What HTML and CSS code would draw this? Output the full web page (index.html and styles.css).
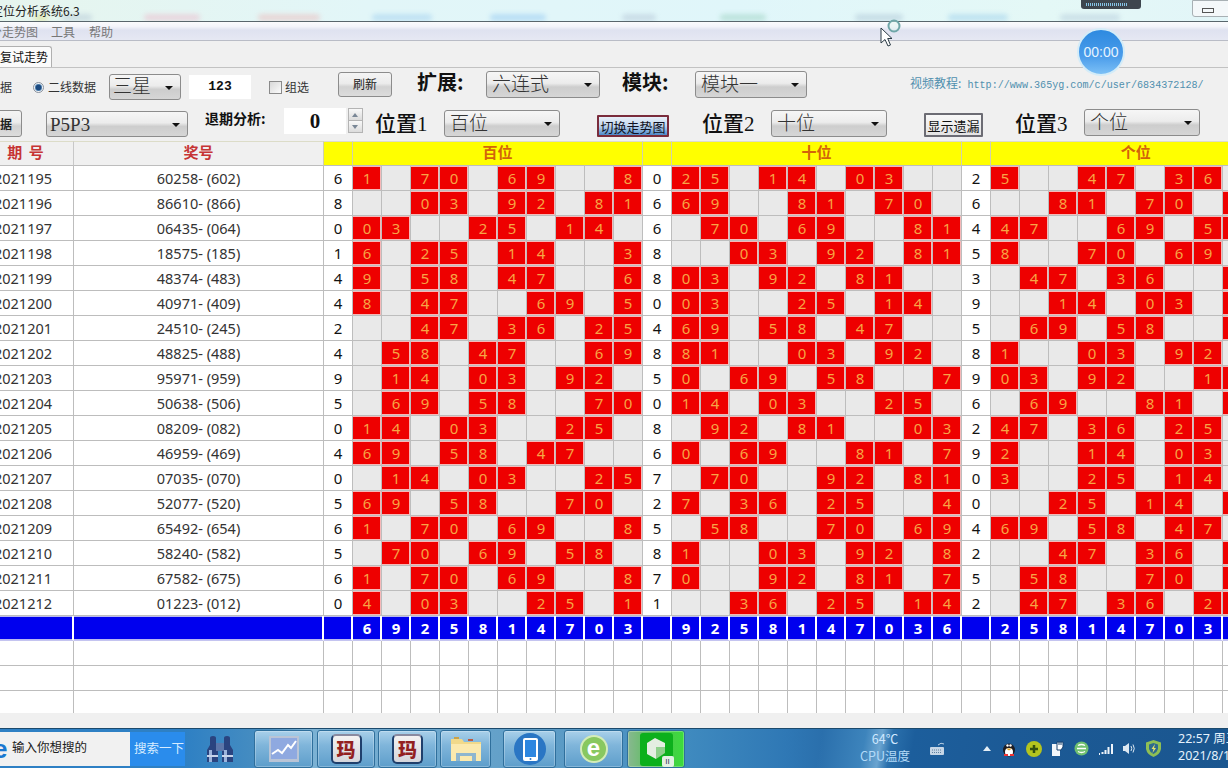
FILE: index.html
```html
<!DOCTYPE html>
<html lang="zh">
<head>
<meta charset="utf-8">
<title>定位分析系统6.3</title>
<link rel="stylesheet" href="styles.css">
</head>
<body>
<div class="screen">
  <div class="titlebar">
    <span class="title-text">定位分析系统6.3</span>
    <i class="blob b1"></i><i class="blob b2"></i><i class="blob b3"></i><i class="blob b4"></i><i class="blob b5"></i><i class="blob b6"></i><i class="blob b7"></i><i class="blob b8"></i><i class="blob b9"></i><i class="blob b10"></i><i class="blob b11"></i>
  </div>
  <div class="menubar">
    <span class="menu-a">分走势图</span><span class="menu-b">工具</span><span class="menu-c">帮助</span>
  </div>
  <div class="tabstrip"><div class="tab">复试走势</div></div>

  <div class="toolbar row1">
    <span class="lbl frag">据</span>
    <span class="radio"></span>
    <span class="lbl radio-text">二线数据</span>
    <div class="select s-star"><span>三星</span></div>
    <div class="field f-123">123</div>
    <span class="check"></span>
    <span class="lbl check-text">组选</span>
    <div class="btn b-refresh">刷新</div>
    <span class="big ext-l">扩展:</span>
    <div class="select s-ext"><span>六连式</span></div>
    <span class="big mod-l">模块:</span>
    <div class="select s-mod"><span>模块一</span></div>
    <span class="link"><span class="link-cn">视频教程:</span> http://www.365yg.com/c/user/6834372128/</span>
  </div>

  <div class="toolbar row2">
    <div class="btn b-data">数据</div>
    <div class="select s-p5"><span>P5P3</span></div>
    <span class="back-l">退期分析:</span>
    <div class="field f-zero">0</div>
    <div class="spin"><span class="spin-up"></span><span class="spin-down"></span></div>
    <span class="pos pos1">位置1</span>
    <div class="select s-pos s-pos1"><span>百位</span></div>
    <div class="btn b-switch">切换走势图</div>
    <span class="pos pos2">位置2</span>
    <div class="select s-pos s-pos2"><span>十位</span></div>
    <div class="btn b-miss">显示遗漏</div>
    <span class="pos pos3">位置3</span>
    <div class="select s-pos s-pos3"><span>个位</span></div>
  </div>

  <div class="gridwrap">
    <table class="grid">
      <colgroup id="cols"></colgroup>
      <thead>
        <tr>
          <th class="h-gray">期 号</th>
          <th class="h-gray">奖号</th>
          <th class="h-yellow"></th>
          <th class="h-yellow" colspan="10">百位</th>
          <th class="h-yellow"></th>
          <th class="h-yellow" colspan="10">十位</th>
          <th class="h-yellow"></th>
          <th class="h-yellow" colspan="10">个位</th>
        </tr>
      </thead>
      <tbody id="rows"></tbody>
    </table>
  </div>
  <div class="gap"></div>

  <div class="taskbar">
    <div class="search">
      <span class="search-e">e</span>
      <span class="search-text">输入你想搜的</span>
    </div>
    <div class="search-btn">搜索一下</div>
    <svg class="binoc" width="30" height="30" viewBox="0 0 30 30">
      <path d="M5 4 Q5 2 8 2 Q11 2 11 4 V11 L13 16 V28 H2 V16 L5 11 Z" fill="#2a4480"/>
      <path d="M19 4 Q19 2 22 2 Q25 2 25 4 V11 L28 16 V28 H17 V16 L19 11 Z" fill="#2a4480"/>
      <rect x="4" y="16" width="3" height="12" fill="#9db4dc"/><rect x="19" y="16" width="3" height="12" fill="#9db4dc"/>
      <rect x="11" y="9" width="8" height="8" fill="#5c76aa"/>
      <rect x="2" y="21" width="11" height="2" fill="#c8d4ea"/><rect x="17" y="21" width="11" height="2" fill="#c8d4ea"/>
    </svg>
    <div class="task t-chart">
      <svg width="30" height="26" viewBox="0 0 30 26">
        <rect width="30" height="26" fill="#b9c4d6"/><rect x="2" y="2" width="26" height="21" fill="#8fa9e0"/>
        <path d="M3 18 L9 14 L13 17 L19 9 L22 12 L27 5" fill="none" stroke="#fff" stroke-width="2"/>
      </svg>
    </div>
    <div class="task t-app1"><div class="tile"><span>玛</span></div></div>
    <div class="task t-app2"><div class="tile"><span>玛</span></div></div>
    <div class="task t-folder">
      <svg width="32" height="26" viewBox="0 0 32 26">
        <path d="M1 3 H12 L14 6 H31 V25 H1 Z" fill="#f1d98a"/><rect x="1" y="8" width="30" height="17" fill="#fbe9ae"/>
        <rect x="4" y="1" width="5" height="2" fill="#c9a24a"/><rect x="18" y="3" width="5" height="2" fill="#c05a40"/>
        <path d="M6 25 V17 H26 V25 H22 V20 H10 V25 Z" fill="#8fb6cf"/>
      </svg>
    </div>
    <div class="task t-phone">
      <svg width="32" height="32" viewBox="0 0 32 32">
        <circle cx="16" cy="16" r="16" fill="#2a76c4"/><rect x="9" y="5" width="15" height="23" rx="2" fill="#fff"/><rect x="11" y="7" width="11" height="17" fill="#2c86e0"/><circle cx="16.500" cy="26" r="1" fill="#2a76c4"/>
      </svg>
    </div>
    <div class="task t-ie"><div class="ie-mark">e</div></div>
    <div class="task t-green">
      <div class="green-tile">
        <svg width="24" height="24" viewBox="0 0 24 24"><path d="M11 1 L21 6 L21 10 L12 10 L12 22 L3 17 L3 6 Z" fill="#e4eee2"/><path d="M12 10 H21 V16 L12 22 Z" fill="#8fd08c"/></svg>
        <span class="pause">II</span>
      </div>
    </div>
    <div class="tray">
      <div class="cpu"><span>64℃</span><span class="cpu-b">CPU温度</span></div>
      <svg class="kbd" width="16" height="14" viewBox="0 0 16 14"><path d="M9 3 Q12 0 15 2" fill="none" stroke="#b8cfe4"/><rect x="1" y="5" width="14" height="8" rx="1" fill="#c6d6e6"/><path d="M3 8 H13 M3 10.500 H13" stroke="#5d7f9e" stroke-dasharray="1 1"/></svg>
      <span class="tri"></span>
      <svg class="ti qq" width="16" height="16" viewBox="0 0 16 16"><ellipse cx="8" cy="9" rx="6" ry="6.500" fill="#1d1d24"/><ellipse cx="8" cy="11" rx="4" ry="4" fill="#fff"/><circle cx="6.500" cy="4.500" r="1.200" fill="#fff"/><circle cx="9.500" cy="4.500" r="1.200" fill="#fff"/><path d="M5 7.500 H11 L8 9.500 Z" fill="#e0a020"/><path d="M3 14 H7 M9 14 H13" stroke="#e33" stroke-width="2"/></svg>
      <svg class="ti plus" width="16" height="16" viewBox="0 0 16 16"><circle cx="8" cy="8" r="8" fill="#b4c41e"/><path d="M8 4 V12 M4 8 H12" stroke="#33500e" stroke-width="2.500"/></svg>
      <svg class="ti plug" width="14" height="16" viewBox="0 0 14 16"><path d="M1 3 H9 V15 H1 Z" fill="#f2f6fa"/><path d="M6 1 H12 V6 L10 9 H6 Z" fill="#fff" stroke="#16406e"/><path d="M8 1 V4 M10 1 V4" stroke="#16406e"/></svg>
      <svg class="ti ie2" width="15" height="15" viewBox="0 0 15 15"><circle cx="7.500" cy="7.500" r="7" fill="#70c070"/><path d="M3 7.500 H12 M4 4.500 Q7.500 2.500 11 4.500 M4 10.500 Q7.500 12.500 11 10.500" stroke="#fff" stroke-width="1.300" fill="none"/></svg>
      <svg class="ti sig" width="16" height="12" viewBox="0 0 16 12"><path d="M1 11 H2 M4.500 11 V9 M7.500 11 V7 M10.500 11 V4 M14 11 V1" stroke="#eef4fa" stroke-width="2" fill="none"/></svg>
      <svg class="ti vol" width="14" height="13" viewBox="0 0 14 13"><path d="M1 4 H3 L7 1 V12 L3 9 H1 Z" fill="#dce8f2"/><path d="M9 4 Q10.500 6.500 9 9 M11 2.500 Q13.500 6.500 11 10.500" stroke="#dce8f2" fill="none"/></svg>
      <svg class="ti shield" width="15" height="17" viewBox="0 0 15 17"><path d="M7.500 0 L15 2.500 V9 Q14 14.500 7.500 17 Q1 14.500 0 9 V2.500 Z" fill="#8ebf55"/><path d="M7.500 3 L12 4.500 V9 Q11 12.500 7.500 14 Q4 12.500 3 9 V4.500 Z" fill="#2e6b8e"/><path d="M9 4 L5.500 9 H7.500 L6.500 13 L10 8 H8 Z" fill="#e7e36c"/></svg>
      <div class="clock"><span>22:57 周五</span><span>2021/8/13</span></div>
    </div>
  </div>

  <div class="rec"><i></i></div>
  <div class="winbtn"><i></i></div>
  <div class="timer">00:00</div>
  <svg class="cursor" width="26" height="30" viewBox="0 0 26 30">
    <circle cx="15" cy="8" r="5.500" fill="#dff3f0" fill-opacity=".5" stroke="#6fa6a8" stroke-width="2"/>
    <path d="M2 10 V25 L6 21.500 L9 28 L11.500 27 L8.700 20.500 L13 20.500 Z" fill="#fff" stroke="#2a3a44"/>
  </svg>
</div>
<script src="script.js"></script>
</body>
</html>
```
FILE: styles.css
```css
* { box-sizing: border-box; }
html, body { margin: 0; padding: 0; }
body { font-family: "Noto Sans", "Noto Sans CJK SC", sans-serif; background: #f0f0f0; }
.screen { position: relative; width: 1228px; height: 768px; overflow: hidden; display: flex; flex-direction: column; background: #f0f0f0; }

/* title + menu */
.titlebar { position: relative; height: 22px; flex: none; overflow: hidden; border-bottom: 1px solid #59666c; background: linear-gradient(90deg, #e6f5ee 0%, #e2f6f8 30%, #e0f6fa 60%, #e4f8f6 85%, #e2f5f8 100%); }
.title-text { position: relative; z-index: 1; display: block; margin-left: -9px; font-size: 12px; line-height: 21px; color: #222; font-family: "Noto Sans CJK SC", sans-serif; white-space: nowrap; }
.blob { position: absolute; top: 14px; height: 7px; border-radius: 4px; filter: blur(2.500px); opacity: .4; }
.b1 { left: 34px; width: 14px; background: #d8d860; }
.b2 { left: 62px; width: 30px; background: #a8bcd0; }
.b3 { left: 144px; width: 56px; background: #f0a8c0; }
.b4 { left: 258px; width: 62px; background: #f0a8a8; }
.b5 { left: 372px; width: 60px; background: #8cc4ec; }
.b6 { left: 490px; width: 56px; background: #7cbcf0; }
.b7 { left: 622px; width: 34px; background: #a8b8cc; }
.b8 { left: 720px; width: 46px; background: #88c8b0; }
.b9 { left: 855px; width: 48px; background: #a0b8cc; }
.b10 { left: 948px; width: 60px; background: #88c4e8; }
.b11 { left: 1060px; width: 60px; background: #a8c0d4; }
.menubar { height: 19px; flex: none; display: flex; align-items: center; border-bottom: 1px solid #b9bcc6; background: linear-gradient(180deg, #fbfbfd 0%, #f3f4fa 25%, #dfe2f0 45%, #e6e8f3 100%); font-size: 12px; color: #777; font-family: "Noto Sans CJK SC", sans-serif; }
.menu-a { margin-left: -10px; width: 48px; white-space: nowrap; }
.menu-b { margin-left: 13px; width: 24px; }
.menu-c { margin-left: 14px; width: 24px; }
.tabstrip { height: 27px; flex: none; display: flex; align-items: flex-end; background: #f0f0f0; border-bottom: 1px solid #c2c2c2; }
.tab { width: 52px; height: 21px; background: #fbfbfb; border: 1px solid #b0b0b0; border-bottom: 0; border-left: 0; border-radius: 0 3px 0 0; font-size: 12px; line-height: 20px; color: #111; white-space: nowrap; font-family: "Noto Sans CJK SC", sans-serif; }

/* toolbars */
.toolbar { display: flex; align-items: flex-start; flex: none; background: #f0f0f0; white-space: nowrap; font-family: "Noto Sans CJK SC", sans-serif; }
.row1 { height: 40px; }
.row2 { height: 33px; }
.lbl { font-size: 12px; line-height: 16px; color: #333; flex: none; }
.frag { width: 13px; margin-top: 11px; }
.radio { flex: none; width: 11px; height: 11px; margin: 14px 0 0 20px; border-radius: 50%; border: 1px solid #88909c; background: radial-gradient(circle, #1c4a80 0 2.500px, #7ea8cc 3.500px, #eef2f6 4px); }
.radio-text { width: 49px; margin: 11px 0 0 4px; }
.check { flex: none; width: 13px; height: 13px; margin: 13px 0 0 18px; border: 1px solid #8a8a8a; background: linear-gradient(135deg, #d8d8d8, #fbfbfb); }
.check-text { width: 24px; margin: 11px 0 0 3px; }

.select { position: relative; flex: none; height: 26px; border: 1px solid #8c8c8c; border-radius: 3px; background: linear-gradient(180deg, #f6f6f6 0%, #ececec 45%, #cdcdcd 60%, #d6d6d6 100%); font-family: "Liberation Serif", "Noto Sans CJK SC", serif; font-size: 19px; font-weight: 300; color: #333; line-height: 25px; padding-left: 5px; }
.select::after { content: ""; position: absolute; right: 7px; top: 11px; border: 4px solid transparent; border-top: 4px solid #111; border-bottom: 0; }
.s-star { width: 72px; margin: 6px 0 0 12px; padding-left: 3px; line-height: 23px; }
.s-ext { width: 114px; margin: 3px 0 0 16px; height: 27px; }
.s-mod { width: 112px; margin: 3px 0 0 20px; height: 27px; }
.s-p5 { width: 142px; margin: 3px 0 0 24px; padding-left: 3px; }
.s-pos { width: 116px; height: 27px; line-height: 26px; }
.s-pos1 { margin: 2px 0 0 15px; }
.s-pos2 { margin: 2px 0 0 15px; }
.s-pos3 { margin: 1px 0 0 15px; }

.field { flex: none; background: #fff; text-align: center; color: #111; font-family: "DejaVu Sans", sans-serif; font-weight: 700; }
.f-123 { width: 62px; height: 24px; margin: 7px 0 0 8px; font-family: "Liberation Mono", monospace; font-size: 13px; line-height: 24px; }
.f-zero { width: 62px; height: 26px; margin-left: 11px; font-family: "Liberation Serif", serif; font-size: 21px; line-height: 26px; }
.spin { flex: none; width: 15px; height: 25px; margin-left: 2px; display: flex; flex-direction: column; border: 1px solid #b4b4b4; background: #eee; }
.spin span { flex: 1; position: relative; }
.spin-up { border-bottom: 1px solid #b4b4b4; background: linear-gradient(180deg, #f8f8f8, #dcdcdc); }
.spin-down { background: linear-gradient(180deg, #f8f8f8, #dcdcdc); }
.spin-up::after, .spin-down::after { content: ""; position: absolute; left: 3px; top: 4px; border: 3px solid transparent; }
.spin-up::after { border-top: 0; border-bottom: 4px solid #7a8796; }
.spin-down::after { border-bottom: 0; border-top: 4px solid #7a8796; }

.btn { flex: none; text-align: center; color: #222; font-size: 12px; border: 1px solid #8c8c8c; border-radius: 3px; background: linear-gradient(180deg, #f4f4f4 0%, #ececec 45%, #d2d2d2 60%, #dcdcdc 100%); }
.b-refresh { width: 54px; height: 25px; margin: 4px 0 0 29px; line-height: 22px; }
.b-data { width: 52px; height: 27px; margin: 2px 0 0 -30px; line-height: 25px; font-weight: 700; text-align: right; padding-right: 9px; }
.b-switch { width: 72px; height: 22px; margin: 7px 0 0 37px; border: 2px solid #7a2c3c; border-radius: 1px; font-size: 13px; line-height: 19px; background: linear-gradient(180deg, #e8eff8 0%, #c0d6ee 50%, #4c8aca 100%); color: #112; }
.b-miss { width: 59px; height: 24px; margin: 5px 0 0 37px; border: 2px solid #6c6c74; border-radius: 1px; font-size: 13px; line-height: 22px; background: linear-gradient(180deg, #f8f8f8, #e4e4e4); color: #111; }

.big { flex: none; width: 53px; font-size: 20px; font-weight: 700; line-height: 28px; color: #111; }
.ext-l { margin: 0 0 0 25px; }
.mod-l { margin: 0 0 0 22px; }
.link { flex: none; margin: 7px 0 0 103px; font-family: "Liberation Mono", monospace; font-size: 10.100px; line-height: 16px; color: #4f8fae; }
.link-cn { font-family: "Noto Sans CJK SC", sans-serif; font-size: 12px; }
.back-l { flex: none; width: 68px; margin: 1px 0 0 17px; font-size: 14px; line-height: 18px; font-weight: 700; color: #111; white-space: nowrap; }
.pos { flex: none; width: 54px; font-family: "Liberation Serif", "Noto Sans CJK SC", serif; font-size: 21px; line-height: 28px; color: #111; font-weight: 500; white-space: nowrap; }
.pos1 { margin: 2px 0 0 12px; }
.pos2 { margin: 2px 0 0 33px; }
.pos3 { margin: 2px 0 0 32px; }

/* grid */
.gridwrap { height: 572px; flex: none; overflow: hidden; background: #fff; }
.grid { margin-left: -23px; width: 1303px; table-layout: fixed; border-collapse: separate; border-spacing: 0; font-family: "Noto Sans", sans-serif; }
.grid th, .grid td { height: 25px; padding: 0; border-left: 1px solid #bdbdbd; border-bottom: 1px solid #bdbdbd; text-align: center; vertical-align: middle; overflow: hidden; white-space: nowrap; line-height: 23px; }
.grid th { font-family: "Noto Sans CJK SC", sans-serif; font-size: 15px; font-weight: 700; line-height: 20px; vertical-align: top; border-top: 1px solid #dcdcc8; border-left-color: #cfcfb0; }
.h-gray { background: #f0f0f0; color: #c63434; word-spacing: 3px; }
.h-yellow { background: #ffff00; color: #d2640a; }
.grid th.h-gray { border-left-color: #c8c8c8; }
.c-info { font-size: 14.500px; color: #333; background: #fff; }
.grid td.c-period { padding-right: 5px; }
.c-mid { font-size: 15px; color: #111; background: #fff; }
.c-empty { background: #e9e9e9; }
.c-hit { background: #ee0000; color: #f7a545; font-size: 15px; box-shadow: inset -1px 0 0 #f7b8b8, inset 0 1px 0 #f7b8b8, inset 0 -1px 0 #f7b8b8; }
.grid td.c-blue { background: #0000ee; color: #fff; font-weight: 700; font-size: 15px; box-shadow: inset -1px 0 0 #fff, inset 0 1px 0 #b9b9f0, inset 0 -1px 0 #b9b9f0; border-left-color: #fff; border-bottom-color: #c4c4f0; }
.c-blank { background: #fff; }

.gap { flex: 1; background: #f0f0f0; border-bottom: 1px solid #1c4a6c; }

/* taskbar */
.taskbar { height: 39px; flex: none; display: flex; align-items: center; background: linear-gradient(90deg, #2e80c4 0%, #2e80c4 15%, #4a8fc0 22%, #7cb2d4 25%, #5d9cc6 45%, #3f8abf 56%, #2f78b5 64%, #2a6fac 67%, #2a6fac 100%); }
.search { flex: none; width: 130px; height: 34px; background: #f1f1f1; display: flex; align-items: center; overflow: hidden; }
.search-e { margin-left: -7px; width: 19px; flex: none; font-family: "Liberation Sans", sans-serif; font-weight: 700; font-size: 26px; line-height: 30px; color: #1a78d0; }
.search-text { font-size: 12.500px; line-height: 16px; margin-top: -3px; color: #222; white-space: nowrap; font-family: "Noto Sans CJK SC", sans-serif; }
.search-btn { flex: none; width: 55px; height: 34px; background: #2a8cec; color: #d8ecff; font-size: 12.500px; line-height: 31px; padding-left: 4px; white-space: nowrap; font-family: "Noto Sans CJK SC", sans-serif; }
.binoc { flex: none; margin-left: 20px; }
.task { flex: none; height: 38px; margin-top: 1px; display: flex; align-items: center; justify-content: center; border: 1px solid #2f6f9c; border-radius: 3px; background: linear-gradient(180deg, #a9d0ea 0%, #7fb5da 40%, #5e9ecb 100%); box-shadow: inset 0 0 0 1px rgba(255,255,255,.25); }
.t-chart { width: 59px; margin-left: 19px; }
.t-app1 { width: 58px; margin-left: 4px; }
.t-app2 { width: 59px; margin-left: 3px; }
.t-folder { width: 51px; margin-left: 3px; }
.t-phone { width: 53px; margin-left: 12px; }
.t-ie { width: 59px; margin-left: 8px; }
.t-green { width: 58px; margin-left: 4px; background: linear-gradient(90deg, #88b890 0%, #50c050 50%, #3cdc3c 100%); }
.tile { width: 31px; height: 30px; border-radius: 5px; background: linear-gradient(180deg, #f4f2f2, #d4d6dc); border: 2px solid #1f3f6c; border-top-color: #8a8aa0; display: flex; align-items: center; justify-content: center; font-family: "Noto Sans CJK SC", sans-serif; font-weight: 900; font-size: 19px; line-height: 20px; color: #93201f; }
.ie-mark { width: 28px; height: 28px; border-radius: 50%; background: #88c860; border: 2px solid #d4ecb8; color: #fff; text-align: center; font-family: "Liberation Sans", sans-serif; font-weight: 700; font-size: 24px; line-height: 22px; }
.green-tile { position: relative; width: 33px; height: 33px; border-radius: 3px; background: #0cb01c; display: flex; align-items: center; justify-content: center; }
.pause { position: absolute; right: -1px; bottom: -1px; width: 12px; height: 11px; border-radius: 2px; background: #e2f0e2; color: #335; font-size: 8px; line-height: 11px; text-align: center; font-family: "Liberation Sans", sans-serif; }
.tray { flex: 1; height: 39px; display: flex; align-items: center; overflow: hidden; color: #fff; background: linear-gradient(100deg, transparent 0%, transparent 25%, #3d84bc 33%, #6aa4d0 36%, #2a70ac 38%, #1c5e9c 42%, #1c5a96 60%, #1a568f 100%); }
.cpu { flex: none; width: 60px; margin: -4px 0 0 170px; display: flex; flex-direction: column; align-items: center; font-size: 12.500px; line-height: 17px; color: #cfe8ff; font-family: "Noto Sans CJK SC", sans-serif; }
.cpu-b { color: #b4daf8; }
.kbd { flex: none; margin-left: 14px; }
.tri { flex: none; margin-left: 38px; border: 4px solid transparent; border-top: 0; border-bottom: 5px solid #e4eef6; }
.ti { flex: none; }
.qq { margin-left: 10px; }
.plus { margin-left: 9px; }
.plug { margin-left: 9px; }
.ie2 { margin-left: 9px; }
.sig { margin-left: 9px; }
.vol { margin-left: 8px; }
.shield { margin-left: 10px; }
.clock { flex: none; margin: -3px 0 0 17px; display: flex; flex-direction: column; font-size: 12.500px; line-height: 17px; color: #e6f2fc; white-space: nowrap; font-family: "Noto Sans", "Noto Sans CJK SC", sans-serif; }

/* overlays */
.rec { position: absolute; left: 1081px; top: 0; width: 60px; height: 9px; background: #3e464e; border-radius: 0 0 3px 3px; }
.rec i { position: absolute; left: 5px; top: 3px; width: 42px; height: 3px; background: repeating-linear-gradient(90deg, #86c4e6 0 1px, #3e464e 1px 2px); }
.winbtn { position: absolute; left: 1192px; top: 0; width: 40px; height: 17px; background: #f4f8fa; border: 1px solid #a8b0b4; border-radius: 0 0 0 3px; }
.winbtn i { position: absolute; left: 9px; top: 7px; width: 12px; height: 5px; border: 1px solid #555; }
.timer { position: absolute; left: 1077px; top: 28px; width: 48px; height: 48px; border-radius: 50%; border: 2px solid #d4ecf8; background: linear-gradient(180deg, #2e8ae0 0%, #4a9cea 60%, #7cc0f6 100%); color: #e6f4ff; font-family: "Liberation Sans", sans-serif; font-size: 14px; line-height: 44px; text-align: center; }
.cursor { position: absolute; left: 879px; top: 18px; }
```
FILE: script.js
```js
var data = [
  ["2021195","60258- (602)","6","1_70_69__8","0","25_14_03__","2","5__47_36__"],
  ["2021196","86610- (866)","8","__03_92_81","6","69__81_70_","6","__81_70_9_"],
  ["2021197","06435- (064)","0","03__25_14_","6","_70_69__81","4","47__69_58_"],
  ["2021198","18575- (185)","1","6_25_14__3","8","__03_92_81","5","8__70_69__"],
  ["2021199","48374- (483)","4","9_58_47__6","8","03_92_81__","3","_47_36__9_"],
  ["2021200","40971- (409)","4","8_47__69_5","0","03__25_14_","9","__14_03_5_"],
  ["2021201","24510- (245)","2","__47_36_25","4","69_58_47__","5","_69_58__7_"],
  ["2021202","48825- (488)","4","_58_47__69","8","81__03_92_","8","1__03_92__"],
  ["2021203","95971- (959)","9","_14_03_92_","5","0_69_58__7","9","03_92__14_"],
  ["2021204","50638- (506)","5","_69_58__70","0","14_03__25_","6","_69__81_7_"],
  ["2021205","08209- (082)","0","14_03__25_","8","_92_81__03","2","47_36_25__"],
  ["2021206","46959- (469)","4","69_58_47__","6","0_69__81_7","9","2__14_03__"],
  ["2021207","07035- (070)","0","_14_03__25","7","_70__92_81","0","3__25_14__"],
  ["2021208","52077- (520)","5","69_58__70_","2","7_36_25__4","0","__25_14_7_"],
  ["2021209","65492- (654)","6","1_70_69__8","5","_58__70_69","4","69_58_47__"],
  ["2021210","58240- (582)","5","_70_69_58_","8","1__03_92_8","2","__47_36_9_"],
  ["2021211","67582- (675)","6","1_70_69__8","7","0__92_81_7","5","_58__70_6_"],
  ["2021212","01223- (012)","0","4_03__25_1","1","__36_25_14","2","_47_36_25_"]
];
var widths = [96, 250, 29];
for (var w = 0; w < 3; w++) {
  for (var k = 0; k < 10; k++) widths.push(29);
  if (w < 2) widths.push(29);
}
document.getElementById("cols").innerHTML = widths.map(function (v) {
  return '<col style="width:' + v + 'px">';
}).join("");

function hits(s) {
  return s.split("").map(function (c) {
    return c === "_" ? '<td class="c-empty"></td>' : '<td class="c-hit">' + c + "</td>";
  }).join("");
}
function blue(s) {
  return s.split("").map(function (c) { return '<td class="c-blue">' + c + "</td>"; }).join("");
}
function blanks(n) {
  var out = "";
  for (var i = 0; i < n; i++) out += '<td class="c-blank"></td>';
  return out;
}
var html = data.map(function (r) {
  return '<tr><td class="c-info c-period">' + r[0] + '</td><td class="c-info">' + r[1] + '</td><td class="c-mid">' + r[2] + "</td>" +
    hits(r[3]) + '<td class="c-mid">' + r[4] + "</td>" + hits(r[5]) + '<td class="c-mid">' + r[6] + "</td>" + hits(r[7]) + "</tr>";
}).join("");
html += '<tr><td class="c-blue"></td><td class="c-blue"></td><td class="c-blue"></td>' + blue("6925814703") +
  '<td class="c-blue"></td>' + blue("9258147036") + '<td class="c-blue"></td>' + blue("2581470369") + "</tr>";
for (var n = 0; n < 3; n++) html += "<tr>" + blanks(35) + "</tr>";
document.getElementById("rows").innerHTML = html;
```
